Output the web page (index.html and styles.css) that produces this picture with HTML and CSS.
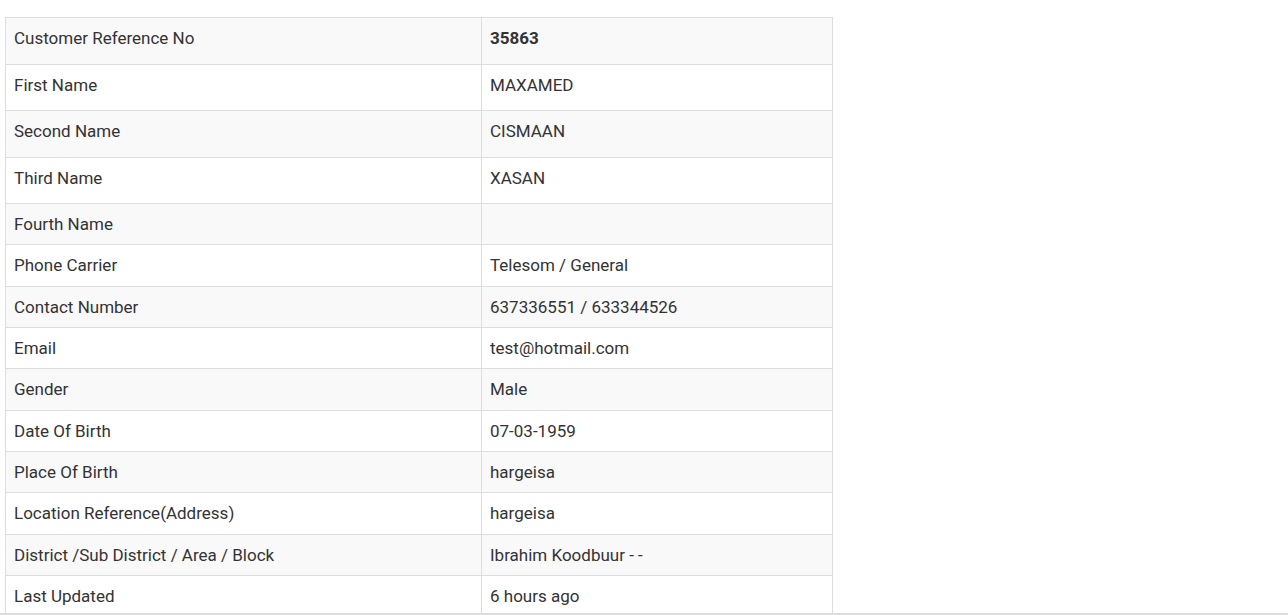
FILE: index.html
```html
<!DOCTYPE html>
<html>
<head>
<meta charset="utf-8">
<link rel="stylesheet" href="styles.css">
</head>
<body>
<div class="wrap">
<table class="details">
<tbody>
<tr class="tall"><td class="label">Customer Reference No</td><td class="val"><b>35863</b></td></tr>
<tr class="tall"><td class="label">First Name</td><td class="val">MAXAMED</td></tr>
<tr class="tall"><td class="label">Second Name</td><td class="val">CISMAAN</td></tr>
<tr class="tall"><td class="label">Third Name</td><td class="val">XASAN</td></tr>
<tr><td class="label">Fourth Name</td><td class="val"></td></tr>
<tr><td class="label">Phone Carrier</td><td class="val">Telesom / General</td></tr>
<tr><td class="label">Contact Number</td><td class="val">637336551 / 633344526</td></tr>
<tr><td class="label">Email</td><td class="val">test@hotmail.com</td></tr>
<tr><td class="label">Gender</td><td class="val">Male</td></tr>
<tr><td class="label">Date Of Birth</td><td class="val">07-03-1959</td></tr>
<tr><td class="label">Place Of Birth</td><td class="val">hargeisa</td></tr>
<tr><td class="label">Location Reference(Address)</td><td class="val">hargeisa</td></tr>
<tr><td class="label">District /Sub District / Area / Block</td><td class="val">Ibrahim Koodbuur - -</td></tr>
<tr><td class="label">Last Updated</td><td class="val">6 hours ago</td></tr>
</tbody>
</table>
</div>
<div class="bottom-edge"></div>
</body>
</html>
```
FILE: styles.css
```css
html, body {
  margin: 0;
  padding: 0;
  background: #fff;
}
body {
  font-family: Roboto, "Noto Sans", sans-serif;
  font-size: 17px;
  color: #333;
  overflow: hidden;
}
.wrap {
  padding: 17px 0 0 5px;
}
.details {
  border-collapse: collapse;
  width: 828px;
  table-layout: fixed;
}
.details td {
  border: 1px solid #ddd;
  padding: 0 8px;
  height: 40.33px;
  vertical-align: middle;
  line-height: 22px;
}
.details tr.tall td {
  height: 36.5px;
  vertical-align: top;
  padding-top: 9px;
}
.details tr:nth-child(odd) td {
  background: #f9f9f9;
}
.details td.label {
  width: 459px;
}
.details td.val b {
  font-weight: 700;
}
.bottom-edge {
  position: fixed;
  left: 0;
  right: 0;
  bottom: 0;
  height: 2px;
  background: #ddd;
}
```
